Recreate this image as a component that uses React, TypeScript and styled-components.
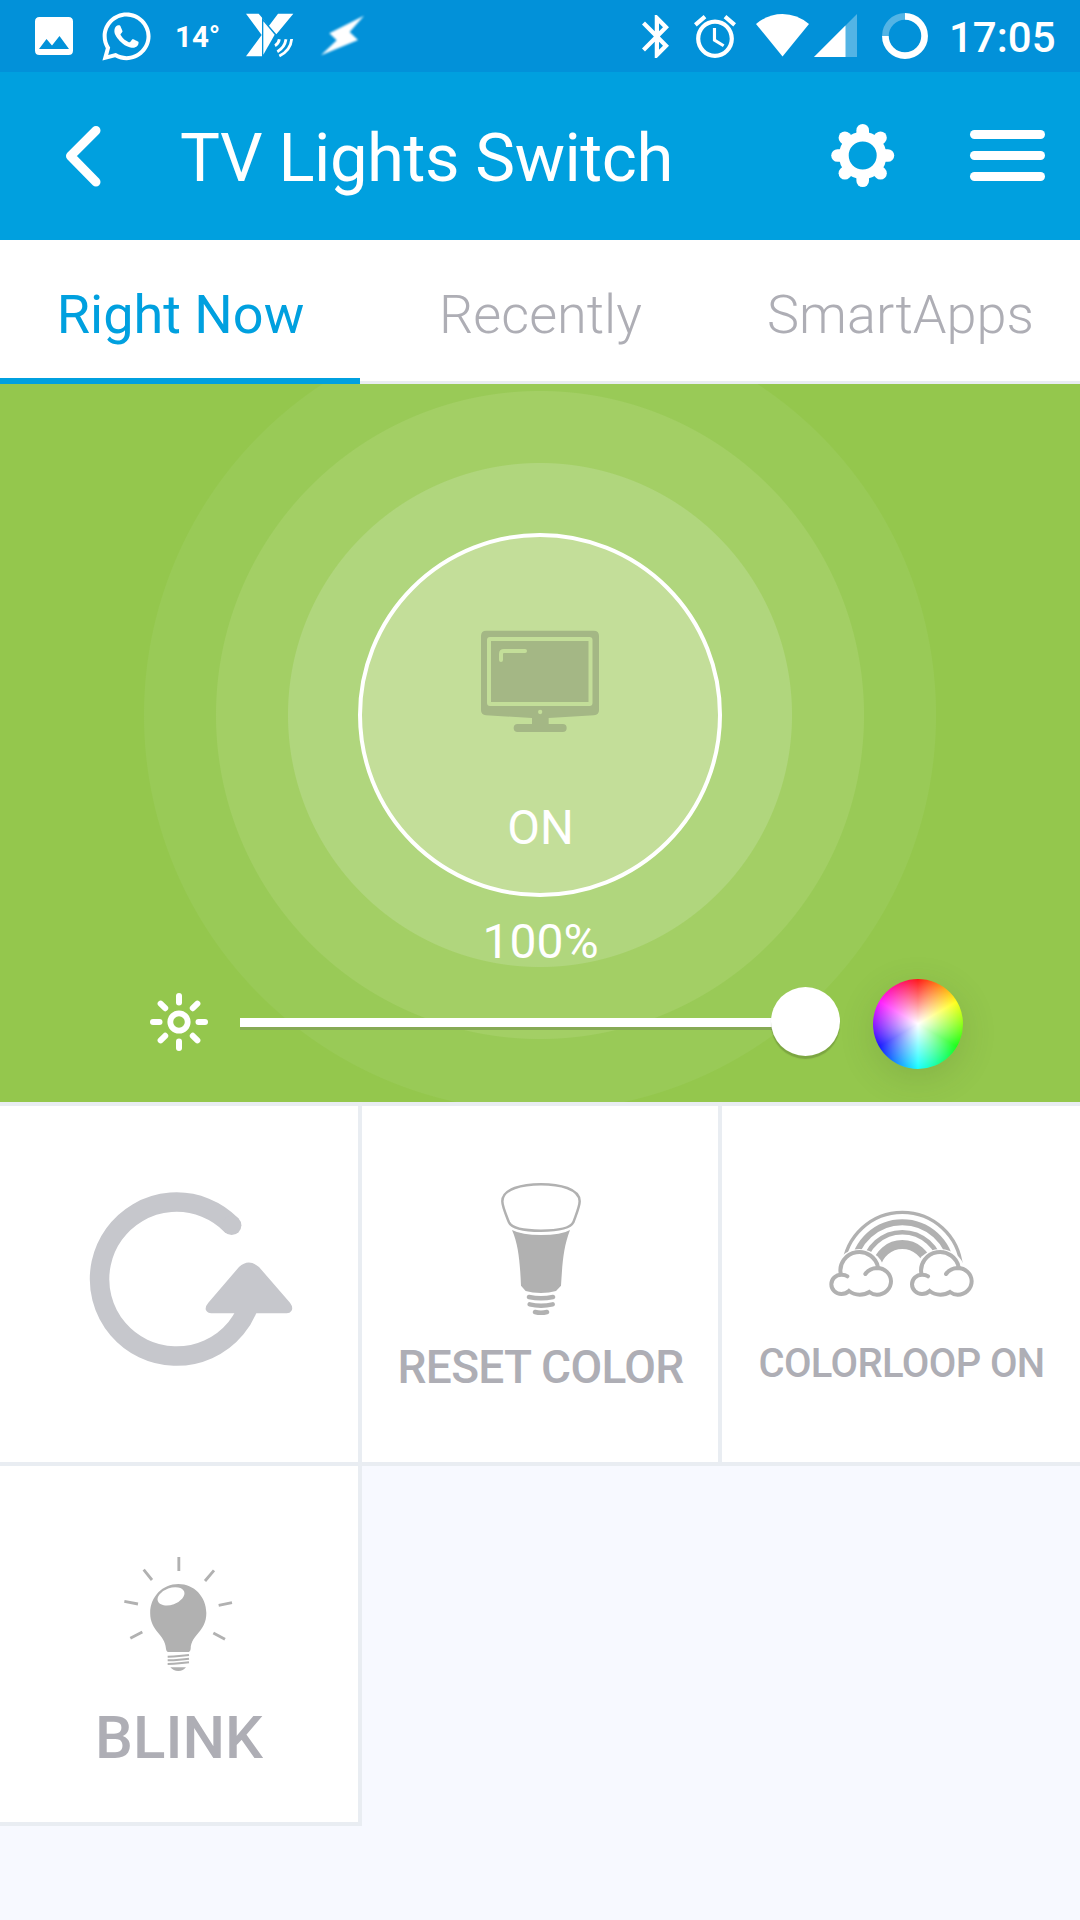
import React from "react";
import styled, { createGlobalStyle } from "styled-components";
import { FaWhatsapp } from "react-icons/fa";

const GlobalStyle = createGlobalStyle`
  * { box-sizing: border-box; }
  body {
    margin: 0;
    background: #f7f9ff;
    font-family: Roboto, "Liberation Sans", sans-serif;
  }
`;

const Screen = styled.main`
  display: flex;
  flex-direction: column;
  width: 1080px;
  height: 1920px;
  overflow: hidden;
  background: #f7f9ff;
`;

const Glyph = styled.svg<{ $ml?: number; $mt?: number }>`
  display: block;
  flex: none;
  margin-left: ${(p) => p.$ml ?? 0}px;
  margin-top: ${(p) => p.$mt ?? 0}px;
`;

/* Status bar */

const StatusBar = styled.div`
  display: flex;
  justify-content: space-between;
  flex: none;
  height: 72px;
  background: #0291d9;
  color: #fff;
`;

const StatusGroup = styled.div`
  display: flex;
  align-items: flex-start;
`;

const WhatsAppSlot = styled.span`
  display: flex;
  margin: 8.5px 0 0 25.5px;
  svg { width: 55px; height: 55px; }
`;

const Temperature = styled.span`
  width: 44px;
  margin: 0 0 0 21.5px;
  font-size: 29.5px;
  font-weight: 700;
  line-height: 75px;
  white-space: nowrap;
`;

const BoltGlyph = styled(Glyph)`
  filter: blur(0.8px);
`;

const Clock = styled.span`
  width: 131px;
  margin-left: 21px;
  font-size: 42px;
  font-weight: 500;
  line-height: 75px;
  white-space: nowrap;
`;

/* Header */

const Header = styled.header`
  display: flex;
  align-items: center;
  flex: none;
  height: 168px;
  background: #00a0df;
  color: #fff;
`;

const Title = styled.h1`
  flex: 1;
  margin: 0 0 0 78px;
  padding-top: 3px;
  font-size: 67px;
  font-weight: 400;
  line-height: 80px;
  letter-spacing: -0.45px;
  white-space: nowrap;
`;

const IconButton = styled.button<{ $mr?: number }>`
  display: flex;
  margin: -1px ${(p) => p.$mr ?? 0}px 0 0;
  padding: 0;
  border: 0;
  background: none;
`;

const MenuBars = styled.span`
  display: flex;
  flex-direction: column;
  gap: 12px;
  width: 75px;
  i {
    height: 9px;
    border-radius: 4.5px;
    background: #fff;
  }
`;

/* Tabs */

const Tabs = styled.nav`
  display: grid;
  grid-template-columns: repeat(3, 360px);
  grid-template-rows: 144px;
  flex: none;
  height: 144px;
  background: #fff;
`;

const Tab = styled.a<{ $active?: boolean }>`
  padding-left: 1px;
  border-bottom: ${(p) => (p.$active ? "6px solid #00a0df" : "3px solid #e9edf2")};
  color: ${(p) => (p.$active ? "#00a0df" : "#aeaeb5")};
  font-size: 54px;
  font-weight: ${(p) => (p.$active ? 400 : 300)};
  line-height: 150px;
  text-align: center;
  white-space: nowrap;
`;

/* Main control */

const Hero = styled.section`
  display: flex;
  flex-direction: column;
  align-items: center;
  flex: none;
  height: 718px;
  padding-top: 149px;
  background: radial-gradient(
    circle at 540px 331px,
    #b0d67d 251.5px, #a3cf65 252.5px,
    #a3cf65 323.5px, #99ca57 324.5px,
    #99ca57 395.5px, #94c74d 396.5px
  );
  color: #fff;
`;

const PowerButton = styled.div`
  display: flex;
  flex-direction: column;
  align-items: center;
  width: 364px;
  height: 364px;
  padding-top: 93px;
  border: 4px solid #fff;
  border-radius: 50%;
  background: #c3de99;
`;

const PowerState = styled.span`
  margin-top: 67px;
  padding-left: 1px;
  font-size: 47.5px;
  line-height: 56px;
`;

const Level = styled.div`
  margin-top: 17px;
  padding-left: 1px;
  font-size: 48px;
  line-height: 56px;
`;

const DimmerRow = styled.div`
  display: flex;
  align-items: center;
  align-self: stretch;
  height: 90px;
  margin-top: 8px;
  padding-left: 149px;
`;

const Slider = styled.div`
  display: flex;
  align-items: center;
  width: 600px;
  margin: -1px 0 0 31px;
`;

const Track = styled.div`
  flex: 1;
  height: 9px;
  margin: -1px -2px 0 0;
  background: #fff;
  box-shadow: 0 3px 0 #86aa54;
`;

const Thumb = styled.div`
  width: 69px;
  height: 69px;
  margin-top: -2px;
  border-radius: 50%;
  background: #fff;
  box-shadow: 0 3px 1px rgba(70, 90, 40, 0.3);
`;

const ColorWheel = styled.div`
  width: 90px;
  height: 90px;
  margin: 1px 0 0 33px;
  border-radius: 50%;
  background:
    radial-gradient(circle, #fff 0%, rgba(255, 255, 255, 0.52) 36%, rgba(255, 255, 255, 0.1) 70%),
    conic-gradient(#f00, #ff0, #0f0, #0ff, #00f, #f0f, #f00);
  box-shadow: 0 9px 34px rgba(60, 80, 40, 0.17);
`;

/* Tiles */

const TileGrid = styled.section`
  display: grid;
  grid-template-columns: 362px 360px 358px;
  grid-auto-rows: 360px;
  flex: none;
  border-top: 4px solid #e9edf2;
`;

const Tile = styled.div<{ $last?: boolean; $top: number }>`
  display: flex;
  flex-direction: column;
  align-items: center;
  padding-top: ${(p) => p.$top}px;
  border-right: ${(p) => (p.$last ? 0 : 4)}px solid #e9edf2;
  border-bottom: 4px solid #e9edf2;
  background: #fff;
`;

const TileLabel = styled.span<{ $size: number; $gap: number; $nudge?: number; $tracking?: number }>`
  margin-top: ${(p) => p.$gap}px;
  padding-left: ${(p) => p.$nudge ?? 0}px;
  color: #aeaeb5;
  font-size: ${(p) => p.$size}px;
  font-weight: 500;
  line-height: 60px;
  letter-spacing: ${(p) => p.$tracking ?? 0}px;
  white-space: nowrap;
`;

const GRAY = "#b1b1b1";

const Cloud = ({ dx = 0 }: { dx?: number }) => (
  <g transform={`translate(${dx} 0)`} fill="none" stroke={GRAY} strokeWidth="12" strokeLinecap="round">
    <path d="M302 340A56 54 0 0 1 414 322" />
    <path d="M376 342Q388 325 411 324A42 40 0 0 1 411 404Q398 404 388 396Q376 404 359 404Q341 404 327 393Q318 402 304 402A30 29 0 0 1 304 344Q316 344 322 349" />
  </g>
);

const TvIcon = () => (
  <Glyph width="120" height="103" viewBox="420 330 360 309">
    <path fill="#a4b785" d="M439 332H761Q777 332 777 348V571Q777 585 762 586L626 594V612H668A12 12 0 0 1 668 636H533A12 12 0 0 1 533 612H576V594L438 586Q423 585 423 571V348Q423 332 439 332Z" />
    <rect x="447" y="357" width="304.500" height="195" rx="3" fill="none" stroke="#c3de99" strokeWidth="12" />
    <path d="M483 420V402Q483 393 492 393H555" fill="none" stroke="#c3de99" strokeWidth="12" strokeLinecap="round" />
    <circle cx="600.500" cy="576" r="6.500" fill="#c3de99" />
  </Glyph>
);

const SunIcon = () => (
  <Glyph $mt={-2} width="60" height="60" viewBox="-30 -30 60 60" fill="none" stroke="#fff">
    <circle r="8.700" strokeWidth="5.800" />
    {[0, 45, 90, 135, 180, 225, 270, 315].map((a) => (
      <path key={a} d="M0 -19.500V-26" strokeWidth="6" strokeLinecap="round" transform={`rotate(${a})`} />
    ))}
  </Glyph>
);

const GearIcon = () => (
  <Glyph width="64" height="64" viewBox="-31.700 -31.500 64 64" fill="none" stroke="#fff">
    <circle r="18.900" strokeWidth="9.800" />
    {[0, 45, 90, 135, 180, 225, 270, 315].map((a) => (
      <path key={a} d="M0 -21V-25.200" strokeWidth="12.600" strokeLinecap="round" transform={`rotate(${a})`} />
    ))}
  </Glyph>
);

const RefreshIcon = () => (
  <Glyph $ml={23} width="204" height="176" viewBox="87 93 612 528">
    <path d="M515 196A231 231 0 1 0 572 420" fill="none" stroke="#c6c7cc" strokeWidth="58.500" />
    <circle cx="515" cy="196" r="29.200" fill="#c6c7cc" />
    <path fill="#c6c7cc" d="M537 321Q566 294 597 321L690 428Q701 443 694 453Q690 460 680 460H454Q443 460 438 451Q434 441 445 428Z" />
  </Glyph>
);

const HueBulbIcon = () => (
  <Glyph $ml={2} width="82" height="134" viewBox="360 66 246 402">
    <path d="M367 124C367 86 428 72.500 483 72.500S599 86 599 124C599 140 589 162 580 187C570 208 524 212 483 212S396 208 387 187C377 162 367 140 367 124Z" fill="none" stroke={GRAY} strokeWidth="7.500" />
    <path d="M396 210Q425 225 483 225Q545 225 570 210C549 265 547 315 543 377L528 393Q508 399 483 399Q456 399 437 393L423 377C420 310 416 255 396 210Z" fill={GRAY} />
    <path d="M447 411Q483 419 519 411M449 433Q483 441 518 433M465 456Q483 461 501 456" fill="none" stroke={GRAY} strokeWidth="13.500" strokeLinecap="round" />
  </Glyph>
);

const RainbowIcon = () => (
  <Glyph $ml={-1} width="146" height="89" viewBox="264 147 438 267">
    <g fill="none" stroke={GRAY}>
      <path d="M310 320A177.600 177.600 0 0 1 664 320" strokeWidth="10" />
      <path d="M339.700 320A148 148 0 0 1 634.300 320" strokeWidth="18" />
      <path d="M370.800 320A117 117 0 0 1 603.200 320" strokeWidth="14" />
      <path d="M408.200 320A80 80 0 0 1 565.800 320" strokeWidth="27" />
    </g>
    <circle cx="358" cy="345" r="78" fill="#fff" />
    <circle cx="600" cy="345" r="78" fill="#fff" />
    <Cloud />
    <Cloud dx={242} />
  </Glyph>
);

const BlinkIcon = () => (
  <Glyph $ml={-2} width="110" height="116" viewBox="189 108 330 348">
    <path fill={GRAY} d="M270.500 279C270.500 230 308 192 355 192S439 230 439 279C439 336 394 342 392 386Q391 396 383 396H327Q319 396 318 386C315 342 270.500 334 270.500 279Z" />
    <ellipse cx="333" cy="229" rx="42" ry="25" transform="rotate(-20 333 229)" fill="#fff" />
    <g fill="none" stroke={GRAY}>
      <path d="M323 410Q360 409 387 405M323 421Q360 420 387 416M323 432Q360 431 387 427" strokeWidth="6" />
      <path d="M356.500 111V153M251 149L276 180M462 151L435 183M193 244L234 252M516 248L476 256M211 355L247 336M495 358L460 339" strokeWidth="8.500" />
    </g>
    <path fill={GRAY} d="M331 442H378Q370 453 355 453Q340 453 331 442Z" />
  </Glyph>
);

export default function App() {
  return (
    <Screen>
      <GlobalStyle />
      <StatusBar>
        <StatusGroup>
          <Glyph $ml={35} $mt={17} width="38" height="38" viewBox="0 0 38 38">
            <path fill="#fff" fillRule="evenodd" d="M4.500 0H33.500Q38 0 38 4.500V33.500Q38 38 33.500 38H4.500Q0 38 0 33.500V4.500Q0 0 4.500 0ZM4 32H34L24.500 19L17 28.500L11.500 22Z" />
          </Glyph>
          <WhatsAppSlot><FaWhatsapp /></WhatsAppSlot>
          <Temperature>14°</Temperature>
          <Glyph $ml={25} $mt={11} width="52" height="48" viewBox="0 0 156 144">
            <path fill="#fff" d="M6 8H44L75 44L102 8H148L97 70L54 20V136H6L53 72Z" />
            <path fill="#fff" d="M58 31L92 71L58 131Z" />
            <path d="M106 85Q104 98 93 104M126 85Q122 110 100 122M143 84Q140 118 106 135" fill="none" stroke="#fff" strokeWidth="8.500" />
          </Glyph>
          <BoltGlyph $ml={22} $mt={13} width="52" height="46" viewBox="0 0 156 138">
            <path fill="#fff" d="M138 8L95 57L120 81L9 127L56 82L34 61Z" />
          </BoltGlyph>
        </StatusGroup>
        <StatusGroup>
          <Glyph $mt={15} width="27" height="43" viewBox="5 2 12.710 20" preserveAspectRatio="none">
            <path fill="#fff" d="M17.710 7.710L12 2h-1v7.590L6.410 5 5 6.410 10.590 12 5 17.590 6.410 19 11 14.410V22h1l5.710-5.710-4.300-4.290 4.300-4.290zM13 5.830l1.880 1.880L13 9.590V5.830zm1.880 10.460L13 18.170v-3.760l1.880 1.880z" />
          </Glyph>
          <Glyph $ml={25} $mt={15} width="42" height="43" viewBox="2 1.860 20 20.140" preserveAspectRatio="none">
            <path fill="#fff" d="M22 5.720l-4.600-3.860-1.290 1.530 4.600 3.860L22 5.720zM7.880 3.390L6.600 1.860 2 5.710l1.290 1.530 4.590-3.850zM12.500 8H11v6l4.750 2.850.75-1.230-4-2.370V8zM12 4c-4.970 0-9 4.030-9 9s4.020 9 9 9c4.970 0 9-4.030 9-9s-4.030-9-9-9zm0 16c-3.870 0-7-3.130-7-7s3.130-7 7-7 7 3.130 7 7-3.130 7-7 7z" />
          </Glyph>
          <Glyph $ml={20} $mt={14} width="53" height="43" viewBox="0 0 53 43">
            <path fill="#fff" d="M0 10Q12 0 26.500 0T53 10L26.500 42.500Z" />
          </Glyph>
          <Glyph $ml={5} $mt={14} width="43" height="43" viewBox="0 0 43 43">
            <path fill="#fff" fillOpacity="0.32" d="M0 43L43 0V43Z" />
            <path fill="#fff" d="M0 43L31.500 11.500V43Z" />
          </Glyph>
          <Glyph $ml={25} $mt={13} width="46" height="46" viewBox="0 0 46 46" fill="none" stroke="#fff" strokeWidth="6.700">
            <path d="M3.400 23A19.600 19.600 0 0 1 23 3.400" strokeOpacity="0.32" />
            <path d="M23 3.400A19.600 19.600 0 1 1 3.400 23" />
          </Glyph>
          <Clock>17:05</Clock>
        </StatusGroup>
      </StatusBar>

      <Header>
        <Glyph $ml={64} $mt={-1} width="38" height="64" viewBox="64 124 38 64">
          <path d="M96 130.500L70.500 156L96 182" fill="none" stroke="#fff" strokeWidth="9" strokeLinecap="round" strokeLinejoin="round" />
        </Glyph>
        <Title>TV Lights Switch</Title>
        <IconButton $mr={75} aria-label="Settings"><GearIcon /></IconButton>
        <IconButton $mr={35} aria-label="Menu"><MenuBars><i /><i /><i /></MenuBars></IconButton>
      </Header>

      <Tabs>
        <Tab $active>Right Now</Tab>
        <Tab>Recently</Tab>
        <Tab>SmartApps</Tab>
      </Tabs>

      <Hero>
        <PowerButton>
          <TvIcon />
          <PowerState>ON</PowerState>
        </PowerButton>
        <Level>100%</Level>
        <DimmerRow>
          <SunIcon />
          <Slider><Track /><Thumb /></Slider>
          <ColorWheel />
        </DimmerRow>
      </Hero>

      <TileGrid>
        <Tile $top={85}><RefreshIcon /></Tile>
        <Tile $top={76}>
          <HueBulbIcon />
          <TileLabel $size={46} $gap={21} $nudge={1} $tracking={-0.68}>RESET COLOR</TileLabel>
        </Tile>
        <Tile $top={103} $last>
          <RainbowIcon />
          <TileLabel $size={40} $gap={36} $nudge={1} $tracking={-0.62}>COLORLOOP ON</TileLabel>
        </Tile>
        <Tile $top={90}>
          <BlinkIcon />
          <TileLabel $size={60} $gap={36}>BLINK</TileLabel>
        </Tile>
      </TileGrid>
    </Screen>
  );
}
